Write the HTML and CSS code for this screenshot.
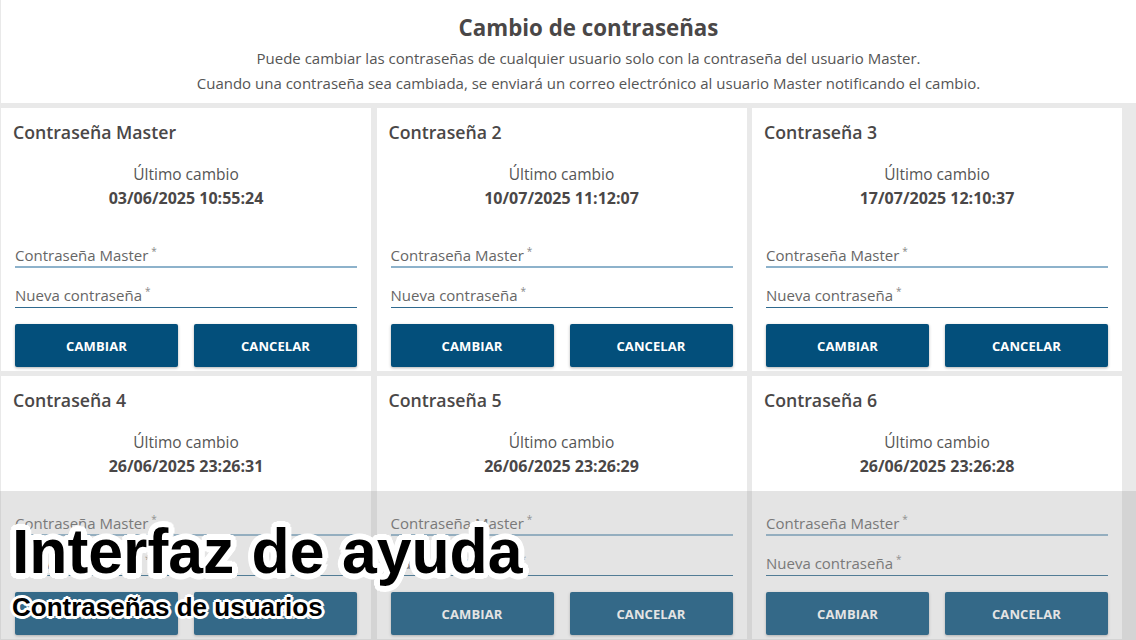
FILE: index.html
```html
<!DOCTYPE html>
<html lang="es">
<head>
<meta charset="utf-8">
<title>Cambio de contraseñas</title>
<link rel="stylesheet" href="styles.css">
</head>
<body>
<div class="page">
  <header class="intro">
    <h1 class="intro-title">Cambio de contraseñas</h1>
    <p class="intro-text">Puede cambiar las contraseñas de cualquier usuario solo con la contraseña del usuario Master.</p>
    <p class="intro-text">Cuando una contraseña sea cambiada, se enviará un correo electrónico al usuario Master notificando el cambio.</p>
  </header>
  <main class="grid">
    <section class="card">
      <h2 class="card-title">Contraseña Master</h2>
      <div class="last">Último cambio</div>
      <div class="date">03/06/2025 10:55:24</div>
      <div class="field field-a"><span class="label">Contraseña Master</span><span class="req">*</span></div>
      <div class="field field-b"><span class="label">Nueva contraseña</span><span class="req">*</span></div>
      <div class="actions"><button class="btn">CAMBIAR</button><button class="btn">CANCELAR</button></div>
    </section>
    <section class="card">
      <h2 class="card-title">Contraseña 2</h2>
      <div class="last">Último cambio</div>
      <div class="date">10/07/2025 11:12:07</div>
      <div class="field field-a"><span class="label">Contraseña Master</span><span class="req">*</span></div>
      <div class="field field-b"><span class="label">Nueva contraseña</span><span class="req">*</span></div>
      <div class="actions"><button class="btn">CAMBIAR</button><button class="btn">CANCELAR</button></div>
    </section>
    <section class="card">
      <h2 class="card-title">Contraseña 3</h2>
      <div class="last">Último cambio</div>
      <div class="date">17/07/2025 12:10:37</div>
      <div class="field field-a"><span class="label">Contraseña Master</span><span class="req">*</span></div>
      <div class="field field-b"><span class="label">Nueva contraseña</span><span class="req">*</span></div>
      <div class="actions"><button class="btn">CAMBIAR</button><button class="btn">CANCELAR</button></div>
    </section>
    <section class="card">
      <h2 class="card-title">Contraseña 4</h2>
      <div class="last">Último cambio</div>
      <div class="date">26/06/2025 23:26:31</div>
      <div class="field field-a"><span class="label">Contraseña Master</span><span class="req">*</span></div>
      <div class="field field-b"><span class="label">Nueva contraseña</span><span class="req">*</span></div>
      <div class="actions"><button class="btn">CAMBIAR</button><button class="btn">CANCELAR</button></div>
    </section>
    <section class="card">
      <h2 class="card-title">Contraseña 5</h2>
      <div class="last">Último cambio</div>
      <div class="date">26/06/2025 23:26:29</div>
      <div class="field field-a"><span class="label">Contraseña Master</span><span class="req">*</span></div>
      <div class="field field-b"><span class="label">Nueva contraseña</span><span class="req">*</span></div>
      <div class="actions"><button class="btn">CAMBIAR</button><button class="btn">CANCELAR</button></div>
    </section>
    <section class="card">
      <h2 class="card-title">Contraseña 6</h2>
      <div class="last">Último cambio</div>
      <div class="date">26/06/2025 23:26:28</div>
      <div class="field field-a"><span class="label">Contraseña Master</span><span class="req">*</span></div>
      <div class="field field-b"><span class="label">Nueva contraseña</span><span class="req">*</span></div>
      <div class="actions"><button class="btn">CAMBIAR</button><button class="btn">CANCELAR</button></div>
    </section>
  </main>
</div>
<div class="caption">
  <div class="caption-title">Interfaz de ayuda</div>
  <div class="caption-sub">Contraseñas de usuarios</div>
</div>
</body>
</html>
```

FILE: styles.css
```css
html, body {
  margin: 0;
  padding: 0;
}
body {
  width: 1136px;
  height: 640px;
  overflow: hidden;
  background: #e9e9e9;
  font-family: "Open Sans", "Noto Sans", sans-serif;
  color: #555;
  position: relative;
}
.page {
  padding-left: 1px;
}
.intro {
  background: #fff;
  height: 103px;
  box-sizing: border-box;
  padding: 13px 0 0 40px;
  text-align: center;
  margin-bottom: 5px;
}
.intro-title {
  margin: 0 0 3px;
  font-size: 22.3px;
  line-height: 30px;
  font-weight: 700;
  color: #4a4747;
}
.intro-text {
  margin: 0;
  font-size: 15px;
  line-height: 25px;
  color: #555;
}
.grid {
  display: grid;
  grid-template-columns: repeat(3, 370px);
  column-gap: 5.5px;
  row-gap: 5px;
}
.card {
  background: #fff;
  height: 263px;
  box-sizing: border-box;
  padding: 12px 14px 0 14px;
}
.card-title {
  margin: 0 0 0 -2px;
  font-size: 17.7px;
  line-height: 24px;
  font-weight: 600;
  color: #4a4747;
}
.last {
  margin-top: 18px;
  text-align: center;
  font-size: 15.5px;
  line-height: 24px;
  color: #555;
}
.date {
  text-align: center;
  font-size: 16px;
  line-height: 24px;
  font-weight: 700;
  color: #4a4747;
}
.field {
  display: flex;
  align-items: flex-start;
  font-size: 15px;
  line-height: 22px;
  color: #666;
}
.field-a {
  margin-top: 34px;
  height: 22px;
  border-bottom: 2px solid #8db2cb;
}
.field-b {
  margin-top: 16px;
  height: 23px;
  border-bottom: 1px solid #2f6a8f;
}
.req {
  font-size: 10px;
  line-height: 14px;
  margin-left: 3px;
  color: #888;
}
.actions {
  margin-top: 16px;
  display: flex;
  gap: 16px;
}
.btn {
  flex: 1;
  height: 43px;
  border: 0;
  border-radius: 2px;
  background: #034f7b;
  color: #fff;
  font-family: "Open Sans", "Noto Sans", sans-serif;
  font-size: 13px;
  font-weight: 700;
  letter-spacing: 0.1px;
  box-shadow: 0 1px 3px rgba(0, 0, 0, 0.3);
  padding: 0;
}
.caption {
  position: absolute;
  left: 0;
  top: 491px;
  width: 1136px;
  height: 149px;
  background: rgba(165, 165, 165, 0.3);
  box-sizing: border-box;
  padding: 25px 0 0 12px;
  font-family: "Liberation Sans", Arial, sans-serif;
  font-weight: 700;
  color: #000;
}
.caption-title {
  font-size: 62.5px;
  line-height: 70px;
  text-shadow:
    6px 0 0 #fff, -6px 0 0 #fff, 0 6px 0 #fff, 0 -6px 0 #fff,
    4px 4px 0 #fff, -4px 4px 0 #fff, 4px -4px 0 #fff, -4px -4px 0 #fff,
    5px 3px 0 #fff, -5px 3px 0 #fff, 5px -3px 0 #fff, -5px -3px 0 #fff,
    3px 5px 0 #fff, -3px 5px 0 #fff, 3px -5px 0 #fff, -3px -5px 0 #fff,
    2px 0 0 #fff, -2px 0 0 #fff, 0 2px 0 #fff, 0 -2px 0 #fff;
}
.caption-sub {
  margin-top: 6px;
  font-size: 26px;
  line-height: 30px;
  text-shadow:
    3px 0 0 #fff, -3px 0 0 #fff, 0 3px 0 #fff, 0 -3px 0 #fff,
    2px 2px 0 #fff, -2px 2px 0 #fff, 2px -2px 0 #fff, -2px -2px 0 #fff,
    1px 0 0 #fff, -1px 0 0 #fff;
}
```
